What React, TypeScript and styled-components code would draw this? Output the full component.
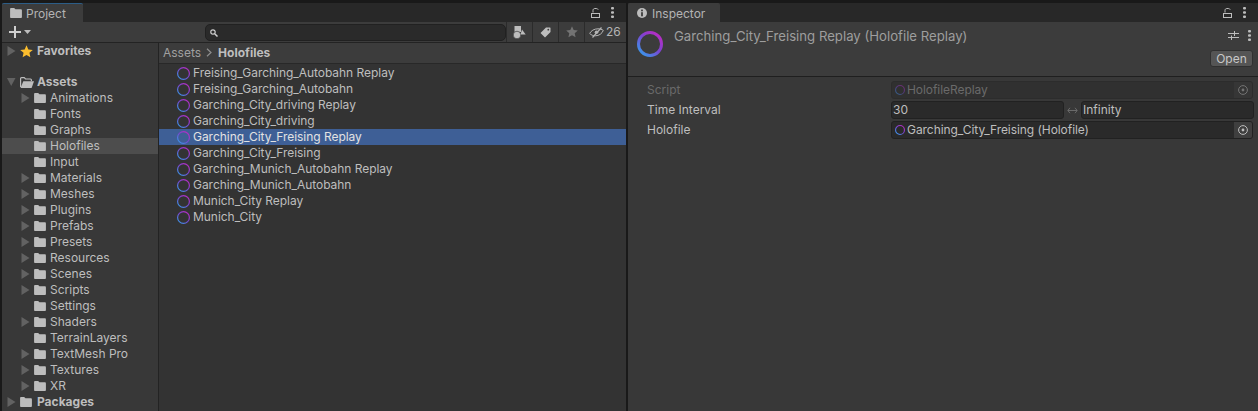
import React from "react";
import styled, { createGlobalStyle } from "styled-components";

const Global = createGlobalStyle`
  html, body { margin: 0; padding: 0; background: #191919; }
  * { box-sizing: border-box; }
  #root { width: 1258px; height: 411px; overflow: hidden; }
`;

const Root = styled.div`
  display: flex;
  width: 1258px;
  height: 411px;
  padding-top: 3px;
  background: #191919;
  font-family: Inter, "Noto Sans", sans-serif;
  font-size: 12px;
  line-height: 16px;
  color: #bebebe;
  overflow: hidden;
`;
const Window = styled.section<{ $w: number; $ml: number }>`
  display: flex;
  flex-direction: column;
  flex: none;
  width: ${(p) => p.$w}px;
  margin-left: ${(p) => p.$ml}px;
  height: 408px;
`;
const TabBar = styled.div`
  display: flex;
  align-items: stretch;
  justify-content: space-between;
  flex: none;
  height: 19px;
  background: #282828;
`;
const Tab = styled.div<{ $w: number; $pad: number; $gap: number; $active?: boolean }>`
  display: flex;
  align-items: center;
  gap: ${(p) => p.$gap}px;
  width: ${(p) => p.$w}px;
  padding-left: ${(p) => p.$pad}px;
  background: #3c3c3c;
  border-top: 1px solid ${(p) => (p.$active ? "#2c5d87" : "#3c3c3c")};
  border-radius: 2px 2px 0 0;
  color: #b4b4b4;
`;
const TabLabel = styled.span`
  padding-top: 2px;
`;
const TabTools = styled.div`
  display: flex;
  align-items: center;
  gap: 11px;
  padding-right: 12px;
`;
const Toolbar = styled.div`
  display: flex;
  align-items: stretch;
  flex: none;
  height: 21px;
  background: #3c3c3c;
  border-bottom: 1px solid #232323;
`;
const AddButton = styled.div`
  display: flex;
  align-items: center;
  gap: 3px;
  width: 203px;
  padding-left: 7px;
`;
const SearchField = styled.div`
  display: flex;
  align-items: center;
  width: 301px;
  height: 17px;
  margin-top: 2px;
  padding-left: 4px;
  background: #2a2a2a;
  border: 1px solid #212121;
  border-radius: 5px;
`;
const ToolButton = styled.div<{ $w: number }>`
  display: flex;
  align-items: center;
  justify-content: center;
  gap: 2px;
  width: ${(p) => p.$w}px;
  border-left: 1px solid #2b2b2b;
  color: #b4b4b4;
`;
const ToolCount = styled(ToolButton)`
  justify-content: flex-start;
  padding-left: 4px;
`;
const Split = styled.div`
  display: flex;
  flex: 1;
  min-height: 0;
`;
const Tree = styled.nav`
  flex: none;
  width: 157px;
  background: #383838;
  border-right: 1px solid #232323;
`;
const TreeRow = styled.div<{ $depth: number; $selected?: boolean; $gap?: number }>`
  display: flex;
  align-items: center;
  height: 16px;
  margin-top: ${(p) => p.$gap ?? 0}px;
  padding-left: ${(p) => (p.$depth ? 19 : 5)}px;
  background: ${(p) => (p.$selected ? "#4d4d4d" : "transparent")};
  color: #bebebe;
  font-weight: ${(p) => (p.$depth ? 400 : 700)};
`;
const Arrow = styled.span`
  display: flex;
  flex: none;
  align-items: center;
  width: 13px;
  height: 16px;
`;
const RowIcon = styled.span<{ $w: number }>`
  display: flex;
  flex: none;
  align-items: center;
  width: ${(p) => p.$w}px;
  height: 16px;
`;
const Browser = styled.div`
  display: flex;
  flex: 1;
  flex-direction: column;
  min-width: 0;
  background: #333333;
`;
const Breadcrumb = styled.div`
  display: flex;
  align-items: center;
  flex: none;
  height: 21px;
  padding-left: 4px;
  padding-bottom: 1px;
  gap: 5px;
  background: #3c3c3c;
  border-bottom: 1px solid #282828;
  color: #a0a0a0;
`;
const Crumb = styled.span`
  margin-left: 1px;
  color: #bebebe;
  font-weight: 700;
`;
const FileList = styled.div`
  display: flex;
  flex-direction: column;
  padding-top: 1px;
`;
const FileRow = styled.div<{ $selected?: boolean }>`
  display: flex;
  align-items: center;
  gap: 3px;
  height: 16px;
  padding-left: 18px;
  letter-spacing: -0.04px;
  background: ${(p) => (p.$selected ? "#3e5f96" : "transparent")};
  color: ${(p) => (p.$selected ? "#e2e2e2" : "#bebebe")};
`;
const InspectorHeader = styled.header`
  display: flex;
  flex: none;
  height: 55px;
  background: #3c3c3c;
  border-bottom: 1px solid #1f1f1f;
  padding: 5px 5px 0 9px;
`;
const BigIcon = styled.div`
  flex: none;
  width: 37px;
  padding-top: 4px;
`;
const Title = styled.div`
  flex: 1;
  padding-top: 1px;
  color: #9e9e9e;
  font-size: 13.2px;
  line-height: 16px;
`;
const HeaderSide = styled.div`
  display: flex;
  flex-direction: column;
  align-items: flex-end;
  gap: 7px;
  width: 44px;
`;
const HeaderTools = styled.div`
  display: flex;
  align-items: center;
  gap: 9px;
  height: 16px;
  padding-right: 2px;
`;
const OpenButton = styled.button`
  width: 43px;
  height: 17px;
  padding: 0;
  font: inherit;
  color: #c8c8c8;
  background: #555555;
  border: 1px solid #303030;
  border-radius: 3px;
`;
const InspectorBody = styled.div`
  flex: 1;
  padding: 3px 5px 0 19px;
  background: #383838;
`;
const PropertyRow = styled.div`
  display: flex;
  align-items: center;
  height: 20px;
`;
const PropLabel = styled.label<{ $disabled?: boolean }>`
  flex: none;
  width: 244px;
  color: ${(p) => (p.$disabled ? "#6a6a6a" : "#bebebe")};
`;
const ObjectField = styled.div<{ $disabled?: boolean }>`
  display: flex;
  flex: 1;
  align-items: center;
  gap: 2px;
  height: 18px;
  padding-left: 3px;
  letter-spacing: -0.06px;
  background: ${(p) => (p.$disabled ? "#303030" : "#2a2a2a")};
  border: 1px solid ${(p) => (p.$disabled ? "#2c2c2c" : "#212121")};
  border-radius: 3px;
  color: ${(p) => (p.$disabled ? "#6a6a6a" : "#bebebe")};
`;
const FieldValue = styled.span`
  flex: 1;
`;
const PickerBox = styled.span<{ $disabled?: boolean }>`
  display: flex;
  align-items: center;
  justify-content: center;
  width: 18px;
  height: 16px;
  background: ${(p) => (p.$disabled ? "#363636" : "#3f3f3f")};
  border-radius: 0 2px 2px 0;
`;
const NumberField = styled.div`
  flex: none;
  width: 173px;
  height: 18px;
  padding-left: 1px;
  background: #2a2a2a;
  border: 1px solid #212121;
  border-radius: 3px;
  line-height: 16px;
`;
const RangeArrow = styled.div`
  display: flex;
  align-items: center;
  justify-content: center;
  flex: none;
  width: 17px;
`;

const Ring = ({ size, stroke, opacity = 1 }: { size: number; stroke: number; opacity?: number }) => {
  const id = React.useId();
  const r = (size - stroke) / 2;
  return (
    <svg width={size} height={size} viewBox={`0 0 ${size} ${size}`} style={{ opacity, flex: "none" }}>
      <defs>
        <linearGradient id={id} x1="0.85" y1="0.1" x2="0.15" y2="0.9">
          <stop offset="0" stopColor="#b52ec4" />
          <stop offset="0.45" stopColor="#7d43d0" />
          <stop offset="1" stopColor="#3f8fe8" />
        </linearGradient>
      </defs>
      <circle cx={size / 2} cy={size / 2} r={r} fill="none" stroke={`url(#${id})`} strokeWidth={stroke} />
    </svg>
  );
};

const Folder = () => (
  <svg width="12" height="10" viewBox="0 0 13 11">
    <path d="M0 1.2C0 .5.5 0 1.2 0h3.3l1.4 1.5h5.900c.7 0 1.200.5 1.200 1.200v7.100c0 .7-.5 1.200-1.200 1.200H1.200C.5 11 0 10.500 0 9.800z" fill="#bdbdbd" />
  </svg>
);
const OpenFolder = () => (
  <svg width="14" height="11" viewBox="0 0 14 11" fill="none">
    <path d="M.6 10V1.500C.6 1 1 .6 1.500.6h2.700l1.300 1.400h5c.5 0 .9.4.9.900V4" stroke="#bdbdbd" strokeWidth="1.200" />
    <path d="M3.300 4.200H14L11.600 11H.5z" fill="#bdbdbd" />
  </svg>
);
const Caret = ({ open }: { open?: boolean }) => (
  <svg width="9" height="10" viewBox="0 0 9 10">
    <path d={open ? "M0 1h8.500L4.200 9z" : "M.5 0l8 5-8 5z"} fill="#626262" />
  </svg>
);
const StarIcon = ({ color, size }: { color: string; size: number }) => (
  <svg width={size} height={size} viewBox="0 0 12 12">
    <path d="M6 .3l1.700 3.800 4.100.4-3.100 2.700.9 4.100L6 9.200 2.400 11.300l.9-4.100L.2 4.500l4.100-.4z" fill={color} />
  </svg>
);
const Lock = () => (
  <svg width="9" height="10" viewBox="0 0 9 10" fill="none">
    <path d="M2 4.500V2.300C2 1.200 2.800.5 3.900.5h1.400c.9 0 1.500.4 1.900 1.200" stroke="#bdbdbd" />
    <rect x=".5" y="5.500" width="8" height="4" stroke="#bdbdbd" />
  </svg>
);
const Dots = () => (
  <svg width="3" height="11" viewBox="0 0 3 11">
    <rect x="0" y="0" width="3" height="2.600" rx="1" fill="#bdbdbd" />
    <rect x="0" y="4.200" width="3" height="2.600" rx="1" fill="#bdbdbd" />
    <rect x="0" y="8.400" width="3" height="2.600" rx="1" fill="#bdbdbd" />
  </svg>
);
const InfoIcon = () => (
  <svg width="10" height="10" viewBox="0 0 10 10">
    <circle cx="5" cy="5" r="5" fill="#bdbdbd" />
    <rect x="4.100" y="1.600" width="1.800" height="1.700" fill="#3c3c3c" />
    <rect x="4.100" y="4.200" width="1.800" height="4.100" fill="#3c3c3c" />
  </svg>
);
const SearchIcon = () => (
  <svg width="8" height="8" viewBox="0 0 8 8" fill="none">
    <circle cx="3" cy="3" r="2.200" stroke="#d0d0d0" strokeWidth="1.200" />
    <path d="M4.700 4.700L7.500 7.500" stroke="#d0d0d0" strokeWidth="1.500" />
  </svg>
);
const PlusIcon = () => (
  <svg width="12" height="12" viewBox="0 0 12 12">
    <path d="M5 0h2v5h5v2H7v5H5V7H0V5h5z" fill="#cfcfcf" />
  </svg>
);
const SmallDown = () => (
  <svg width="7" height="4" viewBox="0 0 7 4">
    <path d="M0 0h7L3.500 4z" fill="#bdbdbd" />
  </svg>
);
const ShapesIcon = () => (
  <svg width="13" height="13" viewBox="0 0 13 13">
    <rect x="1.500" y="0" width="6.500" height="6" fill="#bdbdbd" />
    <circle cx="4" cy="9" r="3.800" fill="#bdbdbd" stroke="#3c3c3c" strokeWidth=".7" />
    <path d="M9 3.500l3.700 5H7.500z" fill="#bdbdbd" />
  </svg>
);
const TagIcon = () => (
  <svg width="11" height="11" viewBox="0 0 11 11">
    <path fillRule="evenodd" d="M6 .5h4c.3 0 .5.2.5.500v4L5 10.500.5 6zM8.300 1.800a.9.900 0 100 1.800.9.900 0 000-1.800z" fill="#bdbdbd" />
  </svg>
);
const EyeOff = () => (
  <svg width="15" height="11" viewBox="0 0 15 11" fill="none">
    <path d="M.7 6.500C2 3.700 5.200 1.800 9 1.800c2 0 3.700.5 5.300 1.600C13 6.800 10 8.800 6.300 8.800c-2.300 0-4.100-.8-5.600-2.300z" stroke="#b4b4b4" />
    <circle cx="7.500" cy="5.300" r="1.800" fill="#b4b4b4" />
    <path d="M3.500 10.500L12.500.5" stroke="#b4b4b4" strokeWidth="1.200" />
  </svg>
);
const Chevron = () => (
  <svg width="6" height="9" viewBox="0 0 6 9" fill="none">
    <path d="M1 .7l4 3.800-4 3.800" stroke="#8e8e8e" strokeWidth="1.200" />
  </svg>
);
const SlidersIcon = () => (
  <svg width="11" height="11" viewBox="0 0 11 11">
    <path d="M0 3h6V1h1v2h4v1H7v2H6V4H0zM0 7h3V5.500h1V7h7v1H4v2H3V8H0z" fill="#bdbdbd" />
  </svg>
);
const Target = ({ dim }: { dim?: boolean }) => (
  <svg width="10" height="10" viewBox="0 0 10 10" fill="none" opacity={dim ? 0.45 : 1}>
    <circle cx="5" cy="5" r="4.400" stroke="#bdbdbd" />
    <circle cx="5" cy="5" r="1.400" fill="#bdbdbd" />
  </svg>
);
const DoubleArrow = () => (
  <svg width="11" height="7" viewBox="0 0 11 7" fill="none">
    <path d="M3 .8L.8 3.500 3 6.200M8 .8l2.200 2.700L8 6.200M1 3.500h9" stroke="#6a6a6a" />
  </svg>
);

type Node = { name: string; arrow?: boolean; selected?: boolean };
const assets: Node[] = [
  { name: "Animations", arrow: true },
  { name: "Fonts" },
  { name: "Graphs" },
  { name: "Holofiles", selected: true },
  { name: "Input" },
  { name: "Materials", arrow: true },
  { name: "Meshes", arrow: true },
  { name: "Plugins", arrow: true },
  { name: "Prefabs", arrow: true },
  { name: "Presets", arrow: true },
  { name: "Resources", arrow: true },
  { name: "Scenes", arrow: true },
  { name: "Scripts", arrow: true },
  { name: "Settings" },
  { name: "Shaders", arrow: true },
  { name: "TerrainLayers" },
  { name: "TextMesh Pro", arrow: true },
  { name: "Textures", arrow: true },
  { name: "XR", arrow: true },
];
const files = [
  "Freising_Garching_Autobahn Replay",
  "Freising_Garching_Autobahn",
  "Garching_City_driving Replay",
  "Garching_City_driving",
  "Garching_City_Freising Replay",
  "Garching_City_Freising",
  "Garching_Munich_Autobahn Replay",
  "Garching_Munich_Autobahn",
  "Munich_City Replay",
  "Munich_City",
];

export default function App() {
  return (
    <Root>
      <Global />
      <Window $w={624} $ml={2}>
        <TabBar>
          <Tab $w={81} $pad={8} $gap={4} $active>
            <Folder />
            <TabLabel>Project</TabLabel>
          </Tab>
          <TabTools>
            <Lock />
            <Dots />
          </TabTools>
        </TabBar>
        <Toolbar>
          <AddButton>
            <PlusIcon />
            <SmallDown />
          </AddButton>
          <SearchField>
            <SearchIcon />
          </SearchField>
          <ToolButton $w={26}>
            <ShapesIcon />
          </ToolButton>
          <ToolButton $w={26}>
            <TagIcon />
          </ToolButton>
          <ToolButton $w={26}>
            <StarIcon color="#737373" size={12} />
          </ToolButton>
          <ToolCount $w={39}>
            <EyeOff />
            26
          </ToolCount>
        </Toolbar>
        <Split>
          <Tree>
            <TreeRow $depth={0}>
              <Arrow><Caret /></Arrow>
              <RowIcon $w={17}><StarIcon color="#fbbd2e" size={13} /></RowIcon>
              Favorites
            </TreeRow>
            <TreeRow $depth={0} $gap={15}>
              <Arrow><Caret open /></Arrow>
              <RowIcon $w={17}><OpenFolder /></RowIcon>
              Assets
            </TreeRow>
            {assets.map((n) => (
              <TreeRow key={n.name} $depth={1} $selected={n.selected}>
                <Arrow>{n.arrow && <Caret />}</Arrow>
                <RowIcon $w={16}><Folder /></RowIcon>
                {n.name}
              </TreeRow>
            ))}
            <TreeRow $depth={0}>
              <Arrow><Caret /></Arrow>
              <RowIcon $w={17}><Folder /></RowIcon>
              Packages
            </TreeRow>
          </Tree>
          <Browser>
            <Breadcrumb>
              Assets
              <Chevron />
              <Crumb>Holofiles</Crumb>
            </Breadcrumb>
            <FileList>
              {files.map((f, i) => (
                <FileRow key={f} $selected={i === 4}>
                  <Ring size={13} stroke={1.2} />
                  {f}
                </FileRow>
              ))}
            </FileList>
          </Browser>
        </Split>
      </Window>
      <Window $w={630} $ml={2}>
        <TabBar>
          <Tab $w={92} $pad={9} $gap={5}>
            <InfoIcon />
            <TabLabel>Inspector</TabLabel>
          </Tab>
          <TabTools>
            <Lock />
            <Dots />
          </TabTools>
        </TabBar>
        <InspectorHeader>
          <BigIcon>
            <Ring size={26} stroke={3} />
          </BigIcon>
          <Title>Garching_City_Freising Replay (Holofile Replay)</Title>
          <HeaderSide>
            <HeaderTools>
              <SlidersIcon />
              <Dots />
            </HeaderTools>
            <OpenButton>Open</OpenButton>
          </HeaderSide>
        </InspectorHeader>
        <InspectorBody>
          <PropertyRow>
            <PropLabel $disabled>Script</PropLabel>
            <ObjectField $disabled>
              <Ring size={10} stroke={1.1} opacity={0.45} />
              <FieldValue>HolofileReplay</FieldValue>
              <PickerBox $disabled><Target dim /></PickerBox>
            </ObjectField>
          </PropertyRow>
          <PropertyRow>
            <PropLabel>Time Interval</PropLabel>
            <NumberField>30</NumberField>
            <RangeArrow><DoubleArrow /></RangeArrow>
            <NumberField>Infinity</NumberField>
          </PropertyRow>
          <PropertyRow>
            <PropLabel>Holofile</PropLabel>
            <ObjectField>
              <Ring size={10} stroke={1.1} />
              <FieldValue>Garching_City_Freising (Holofile)</FieldValue>
              <PickerBox><Target /></PickerBox>
            </ObjectField>
          </PropertyRow>
        </InspectorBody>
      </Window>
    </Root>
  );
}
